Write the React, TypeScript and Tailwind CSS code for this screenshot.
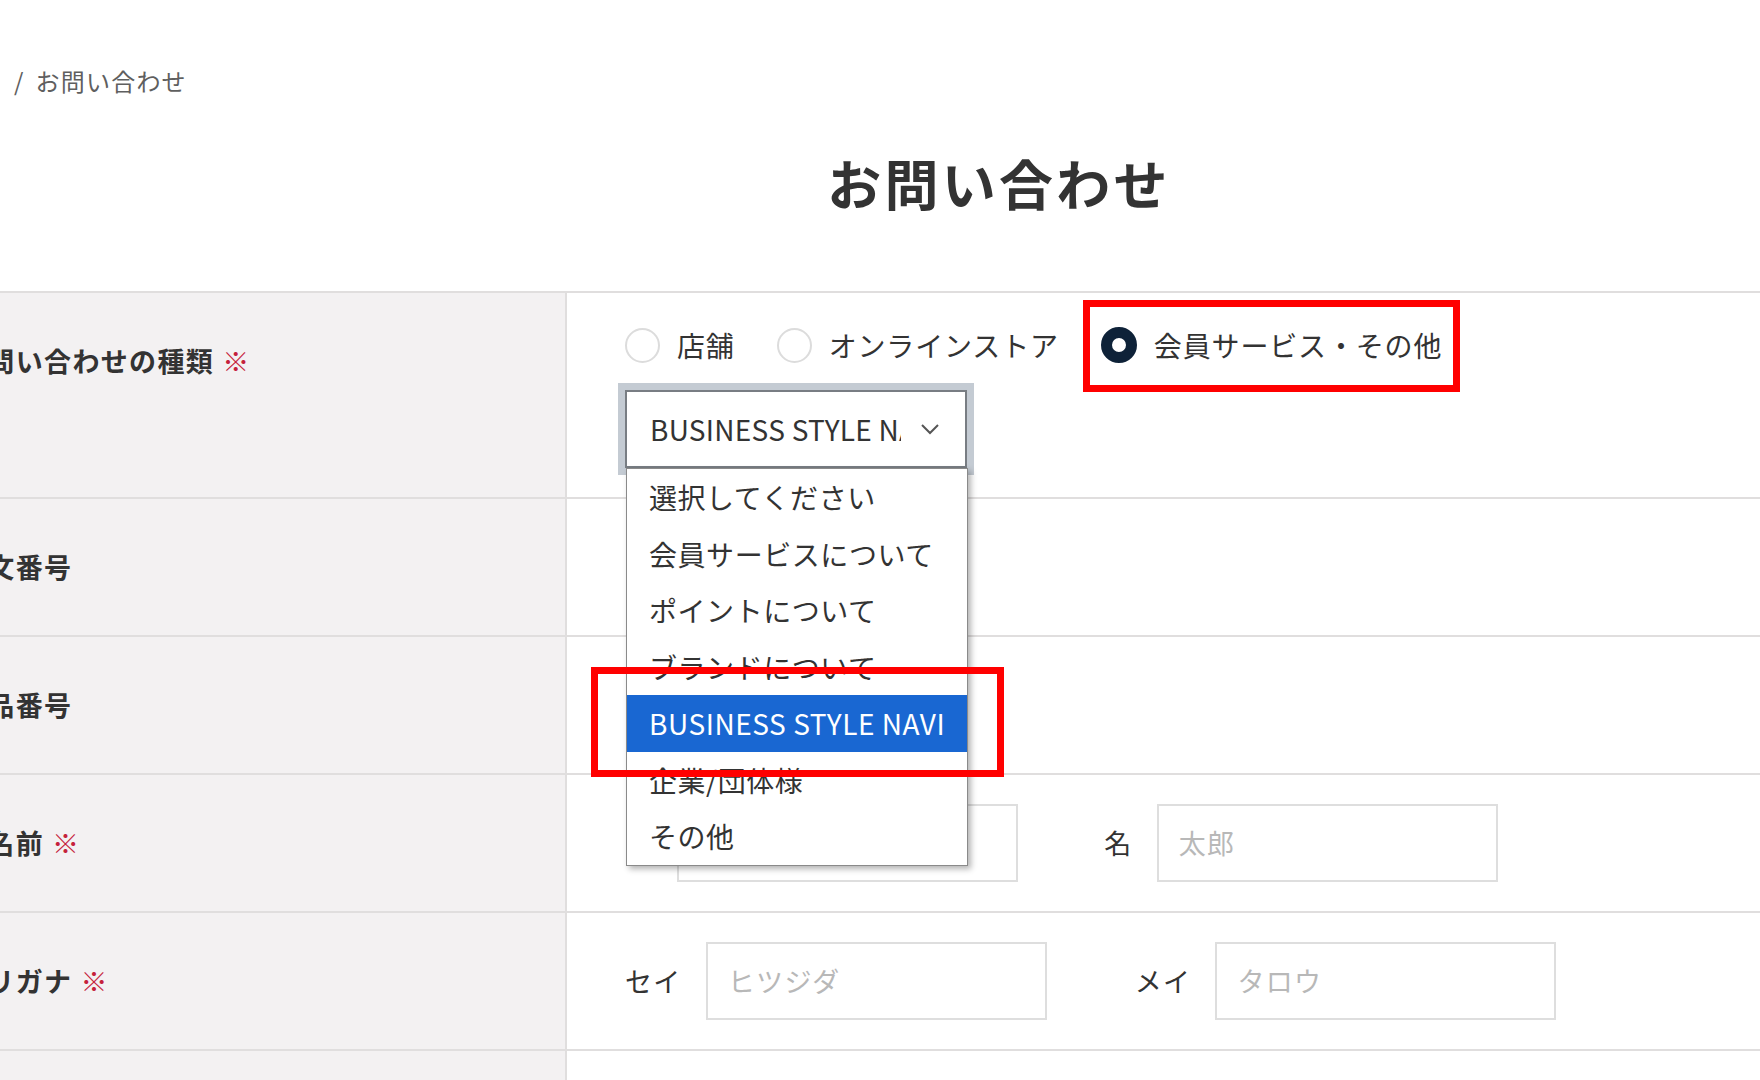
import React from 'react';

const options = [
  '選択してください',
  '会員サービスについて',
  'ポイントについて',
  'ブランドについて',
  'BUSINESS STYLE NAVI',
  '企業/団体様',
  'その他',
];

function Radio({ label, checked = false }: { label: string; checked?: boolean }) {
  return (
    <span className="flex items-center gap-[17px]">
      <span
        className={
          checked
            ? 'block w-[36px] h-[36px] rounded-full bg-white border-[11px] border-[#0e2238]'
            : 'block w-[35px] h-[35px] rounded-full bg-white border-2 border-[#dcdcdc]'
        }
      />
      <span className="text-[28px] leading-[36px] tracking-[0.03em] text-[#333]">{label}</span>
    </span>
  );
}

function Label({ text, required = false, top = false }: { text: string; required?: boolean; top?: boolean }) {
  return (
    <div
      className={
        top
          ? 'w-[567px] shrink-0 bg-[#f3f1f2] border-r-2 border-[#e0dede] pt-[50px]'
          : 'w-[567px] shrink-0 bg-[#f3f1f2] border-r-2 border-[#e0dede] flex items-center'
      }
    >
      <span className="ml-[-41px] whitespace-nowrap text-[27px] leading-[36px] font-bold tracking-[0.05em] text-[#333]">
        {text}
        {required && <span className="ml-[8px] font-normal text-[#c5213b]">※</span>}
      </span>
    </div>
  );
}

function TextField({ label, placeholder, first = false }: { label: string; placeholder: string; first?: boolean }) {
  return (
    <div className="flex items-center gap-[24px]">
      <span className={first ? 'ml-[3px] mr-[-3px] text-[27px] tracking-[0.05em] text-[#333]' : 'text-[27px] tracking-[0.05em] text-[#333]'}>
        {label}
      </span>
      <div className="w-[341px] h-[78px] border-2 border-[#dedede] bg-white flex items-center px-[20px]">
        <span className="text-[27px] tracking-[0.05em] text-[#b8b8b8]">{placeholder}</span>
      </div>
    </div>
  );
}

export default function App() {
  return (
    <div className="relative w-[1760px] h-[1080px] overflow-hidden bg-white font-['Noto_Sans_CJK_JP',sans-serif]">
      {/* Breadcrumb */}
      <div className="flex items-center gap-[11px] pl-[14px] pt-[66px] h-[96px] text-[24px] leading-[30px] tracking-[0.05em] text-[#5f5f5f]">
        <span>/</span>
        <span>お問い合わせ</span>
      </div>

      {/* Title */}
      <h1 className="mt-[55px] pl-[238px] text-center text-[54px] leading-[64px] font-bold tracking-[0.06em] text-[#333]">
        お問い合わせ
      </h1>

      {/* Form table */}
      <div className="mt-[76px] border-t-2 border-[#e0dede]">
        {/* Inquiry type */}
        <div className="flex h-[206px] border-b-2 border-[#e0dede]">
          <Label text="お問い合わせの種類" required top />
          <div className="flex-1 pl-[58px] pt-[34px]">
            <div className="flex items-center gap-[42px] h-[36px]">
              <Radio label="店舗" />
              <Radio label="オンラインストア" />
              <Radio label="会員サービス・その他" checked />
            </div>
            <div className="relative mt-[27px] w-[342px] h-[78px]">
              <div className="w-full h-full bg-white border-2 border-[#787d83] shadow-[0_0_0_7px_#c4cbd3] flex items-center">
                <div className="ml-[23px] w-[251px] overflow-hidden whitespace-nowrap text-[28px] tracking-[0.01em] text-[#333]">
                  BUSINESS STYLE NAVI
                </div>
                <svg className="ml-[19px]" width="20" height="12" viewBox="0 0 20 12" fill="none">
                  <polyline points="2,2 10,10 18,2" stroke="#555" strokeWidth="2" />
                </svg>
              </div>
              <ul className="absolute z-20 left-[1px] top-[78px] w-[342px] bg-white border border-[#8a8a8a] shadow-[3px_3px_6px_rgba(0,0,0,0.3)]">
                {options.map((o) => (
                  <li
                    key={o}
                    className={
                      o === 'BUSINESS STYLE NAVI'
                        ? 'h-[56.5px] flex items-center pl-[22px] bg-[#1967d2] text-white text-[28px] tracking-[0.02em] whitespace-nowrap'
                        : 'h-[56.5px] flex items-center pl-[22px] text-[#333] text-[28px] tracking-[0.02em] whitespace-nowrap'
                    }
                  >
                    {o}
                  </li>
                ))}
              </ul>
            </div>
          </div>
        </div>

        {/* Order number */}
        <div className="flex h-[138px] border-b-2 border-[#e0dede]">
          <Label text="注文番号" />
          <div className="flex-1" />
        </div>

        {/* Product number */}
        <div className="flex h-[138px] border-b-2 border-[#e0dede]">
          <Label text="商品番号" />
          <div className="flex-1" />
        </div>

        {/* Name */}
        <div className="flex h-[138px] border-b-2 border-[#e0dede]">
          <Label text="お名前" required />
          <div className="flex-1 pl-[58px] flex items-center gap-[86px]">
            <TextField label="姓" placeholder="羊田" first />
            <TextField label="名" placeholder="太郎" />
          </div>
        </div>

        {/* Furigana */}
        <div className="flex h-[138px] border-b-2 border-[#e0dede]">
          <Label text="フリガナ" required />
          <div className="flex-1 pl-[58px] flex items-center gap-[88px]">
            <TextField label="セイ" placeholder="ヒツジダ" />
            <TextField label="メイ" placeholder="タロウ" />
          </div>
        </div>

        <div className="flex h-[138px]">
          <Label text="" />
          <div className="flex-1" />
        </div>
      </div>

      {/* Annotation boxes */}
      <div className="absolute z-30 left-[1083px] top-[300px] w-[377px] h-[92px] border-[7px] border-[#ff0000]" />
      <div className="absolute z-30 left-[591px] top-[667px] w-[413px] h-[110px] border-[7px] border-[#ff0000]" />
    </div>
  );
}
